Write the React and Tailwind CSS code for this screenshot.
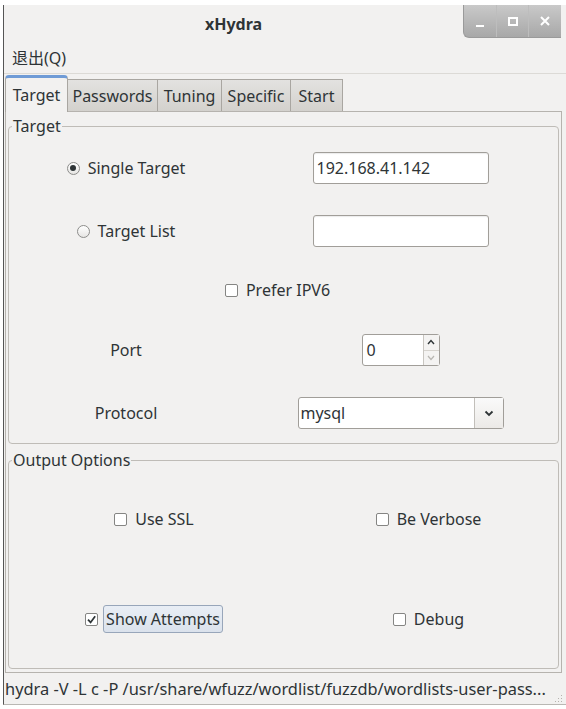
import React from "react";

const ui = "font-['Noto_Sans',sans-serif] text-[#2e3436]";

function Radio({ checked }) {
  return (
    <span className="flex h-[13px] w-[13px] shrink-0 items-center justify-center rounded-full border border-[#8d8d8b] bg-gradient-to-b from-white to-[#e6e5e3]">
      {checked && <span className="h-[6px] w-[6px] rounded-full bg-[#2e3436]" />}
    </span>
  );
}

function Check({ checked }) {
  return (
    <span className="flex h-[13px] w-[13px] shrink-0 items-center justify-center rounded-[2px] border border-[#858583] bg-white">
      {checked && (
        <svg viewBox="0 0 12 12" className="h-[11px] w-[11px]">
          <path d="M2.2 6.2 L5 9.2 L10 2.4" fill="none" stroke="#2e3436" strokeWidth="1.9" />
        </svg>
      )}
    </span>
  );
}

function Entry({ value, width }) {
  return (
    <div className={`flex h-[32px] items-center rounded-[3px] border border-[#a19e99] bg-white px-[3px] shadow-[inset_0_1px_1px_rgba(0,0,0,0.08)] ${width}`}>
      {value}
    </div>
  );
}

function Tab({ label, active, width }) {
  if (active) {
    return (
      <div className={`relative z-10 -mb-px flex h-[37px] items-center justify-center rounded-t-[4px] border border-b-0 border-[#a9a6a1] border-t-[3px] border-t-[#6f9bd6] bg-[#f2f1f0] ${width}`}>
        {label}
      </div>
    );
  }
  return (
    <div className={`flex h-[32px] items-center justify-center border border-b-0 border-l-0 border-[#a9a6a1] bg-gradient-to-b from-[#e3e2e0] to-[#d3d1cd] ${width}`}>
      {label}
    </div>
  );
}

export default function App() {
  return (
    <div className={`h-[709px] w-[566px] overflow-hidden bg-white pl-[3px] pt-[5px] text-[16px] leading-[18px] ${ui}`}>
      <div className="flex h-[700px] flex-col border-b border-l border-[#555] border-b-[#b9b7b3] bg-[#f2f1f0]">
        {/* title bar */}
        <div className="flex h-[37px] shrink-0 items-start">
          <div className="flex h-[37px] flex-1 items-center justify-center font-bold">xHydra</div>
          <div className="mr-[5px] flex h-[33px] w-[98px] overflow-hidden rounded-bl-[6px] border-b border-l border-[#9a9a9a] bg-gradient-to-b from-[#c9c9c9] to-[#a8a8a8]">
            <div className="flex flex-1 items-end justify-center border-r border-[#bdbdbd] pb-[10px]">
              <span className="h-[2px] w-[8px] bg-white" />
            </div>
            <div className="flex flex-1 items-center justify-center border-r border-[#bdbdbd]">
              <span className="h-[9px] w-[10px] border-2 border-white" />
            </div>
            <div className="flex flex-1 items-center justify-center">
              <svg viewBox="0 0 12 12" className="h-[12px] w-[12px]">
                <path d="M2 2 L10 10 M10 2 L2 10" stroke="white" strokeWidth="2" />
              </svg>
            </div>
          </div>
        </div>

        {/* menu bar */}
        <div className="flex h-[32px] shrink-0 items-center border-b border-[#dcdad6] pl-[8px] font-['Noto_Sans','Noto_Sans_CJK_SC',sans-serif]">
          退出(Q)
        </div>

        {/* tabs */}
        <div className="flex h-[37px] shrink-0 items-end pl-[1px]">
          <Tab label="Target" active width="w-[63px]" />
          <Tab label="Passwords" width="w-[90px]" />
          <Tab label="Tuning" width="w-[64px]" />
          <Tab label="Specific" width="w-[69px]" />
          <Tab label="Start" width="w-[52px]" />
        </div>

        {/* notebook page */}
        <div className="ml-[1px] mr-[4px] flex h-[562px] shrink-0 flex-col border border-[#b6b3ae] px-[2px] pb-[3px]">
          <fieldset className="mt-[5px] rounded-[4px] border border-[#bfbcb7] pb-[14px]">
            <legend className="ml-[3px] px-px">Target</legend>
            <div className="mt-[17px] grid grid-cols-[234px_1fr]">
              <div className="flex h-[32px] items-center justify-center gap-[8px]">
                <Radio checked />
                <span>Single Target</span>
              </div>
              <div className="flex justify-center">
                <Entry value="192.168.41.142" width="w-[176px]" />
              </div>

              <div className="mt-[31px] flex h-[32px] items-center justify-center gap-[8px]">
                <Radio />
                <span>Target List</span>
              </div>
              <div className="mt-[31px] flex justify-center">
                <Entry value="" width="w-[176px]" />
              </div>

              <div className="col-span-2 mt-[27px] flex h-[32px] items-center justify-center gap-[8px] pr-[12px]">
                <Check />
                <span>Prefer IPV6</span>
              </div>

              <div className="mt-[28px] flex h-[32px] items-center justify-center">Port</div>
              <div className="mt-[28px] flex justify-center">
                <div className="flex h-[32px] w-[78px] rounded-[3px] border border-[#a19e99] bg-white">
                  <div className="flex flex-1 items-center pl-[4px]">0</div>
                  <div className="flex w-[16px] flex-col border-l border-[#c9c6c1] bg-[#f4f3f2]">
                    <div className="flex flex-1 items-center justify-center border-b border-[#d6d3ce]">
                      <svg viewBox="0 0 8 6" className="h-[6px] w-[8px]">
                        <path d="M1 5 L4 1.5 L7 5" fill="none" stroke="#2e3436" strokeWidth="1.4" />
                      </svg>
                    </div>
                    <div className="flex flex-1 items-center justify-center">
                      <svg viewBox="0 0 8 6" className="h-[6px] w-[8px]">
                        <path d="M1 1 L4 4.5 L7 1" fill="none" stroke="#b8b6b2" strokeWidth="1.2" />
                      </svg>
                    </div>
                  </div>
                </div>
              </div>

              <div className="mt-[31px] flex h-[32px] items-center justify-center">Protocol</div>
              <div className="mt-[31px] flex justify-center">
                <div className="flex h-[32px] w-[206px] rounded-[3px] border border-[#a19e99] bg-white">
                  <div className="flex flex-1 items-center pl-[2px]">mysql</div>
                  <div className="flex w-[29px] items-center justify-center border-l border-[#c2bfba] bg-gradient-to-b from-[#fafafa] to-[#eceae7]">
                    <svg viewBox="0 0 10 7" className="h-[7px] w-[10px]">
                      <path d="M1.5 1.5 L5 5 L8.5 1.5" fill="none" stroke="#2e3436" strokeWidth="1.8" />
                    </svg>
                  </div>
                </div>
              </div>
            </div>
          </fieldset>

          <fieldset className="mt-[7px] flex-1 rounded-[4px] border border-[#bfbcb7]">
            <legend className="ml-[3px] px-px">Output Options</legend>
            <div className="mt-[36px] grid grid-cols-[290px_1fr]">
              <div className="flex h-[28px] items-center justify-center gap-[8px]">
                <Check />
                <span>Use SSL</span>
              </div>
              <div className="flex h-[28px] items-center justify-center gap-[8px]">
                <Check />
                <span>Be Verbose</span>
              </div>

              <div className="mt-[72px] flex h-[28px] items-center justify-center gap-[5px]">
                <Check checked />
                <span className="flex h-[28px] items-center rounded-[3px] border border-[#98a6ba] bg-gradient-to-b from-[#e9eef5] to-[#dbe2ec] px-[2px]">
                  Show Attempts
                </span>
              </div>
              <div className="mt-[72px] flex h-[28px] items-center justify-center gap-[8px]">
                <Check />
                <span>Debug</span>
              </div>
            </div>
          </fieldset>
        </div>

        {/* status bar */}
        <div className="relative flex h-[32px] shrink-0 items-center whitespace-nowrap pl-[1px] text-[16.4px]">
          hydra -V -L c -P /usr/share/wfuzz/wordlist/fuzzdb/wordlists-user-pass...
          <div className="absolute bottom-[3px] right-[4px] grid grid-cols-3 gap-[2px]">
            {[0, 1, 2, 3, 4, 5, 6, 7, 8].map((i) => (
              <span key={i} className={`h-[1px] w-[1px] ${i % 3 >= 2 - Math.floor(i / 3) ? "bg-[#b5b2ad]" : ""}`} />
            ))}
          </div>
        </div>
      </div>
    </div>
  );
}
